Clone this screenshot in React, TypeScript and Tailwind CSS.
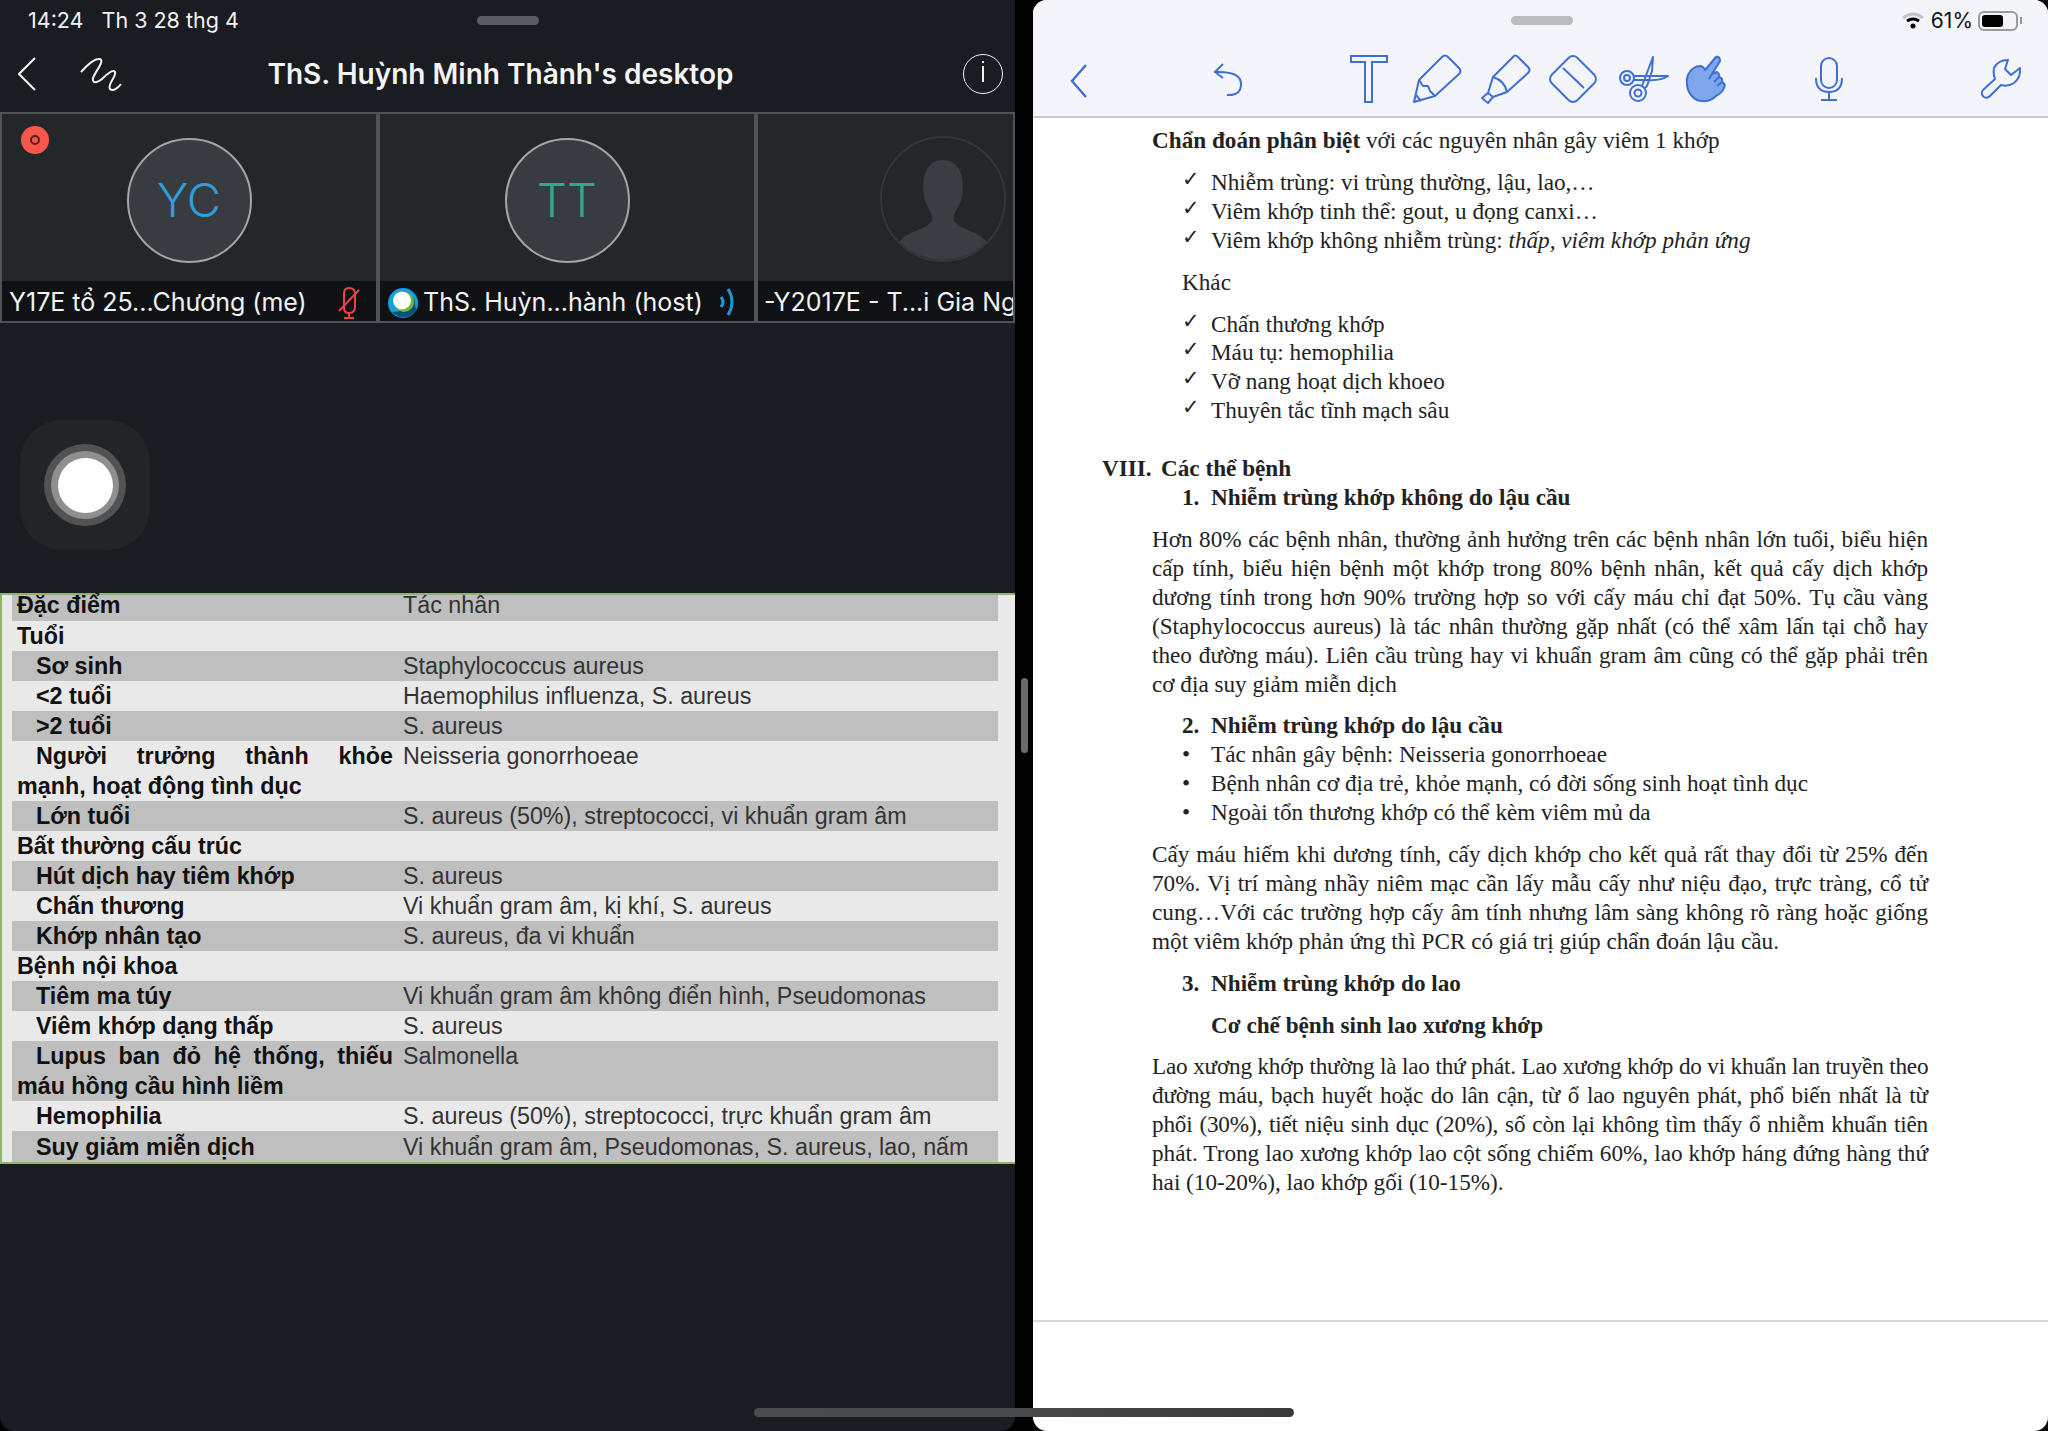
const BLUE = "#3f6fd2";

type Row = { a: string; b: string; indent?: boolean; lines?: [string, string] };

const ROWS: Row[] = [
  { a: "Đặc điểm", b: "Tác nhân" },
  { a: "Tuổi", b: "" },
  { a: "Sơ sinh", b: "Staphylococcus aureus", indent: true },
  { a: "<2 tuổi", b: "Haemophilus influenza, S. aureus", indent: true },
  { a: ">2 tuổi", b: "S. aureus", indent: true },
  { a: "", b: "Neisseria gonorrhoeae", indent: true, lines: ["Người trưởng thành khỏe", "mạnh, hoạt động tình dục"] },
  { a: "Lớn tuổi", b: "S. aureus (50%), streptococci, vi khuẩn gram âm", indent: true },
  { a: "Bất thường cấu trúc", b: "" },
  { a: "Hút dịch hay tiêm khớp", b: "S. aureus", indent: true },
  { a: "Chấn thương", b: "Vi khuẩn gram âm, kị khí, S. aureus", indent: true },
  { a: "Khớp nhân tạo", b: "S. aureus, đa vi khuẩn", indent: true },
  { a: "Bệnh nội khoa", b: "" },
  { a: "Tiêm ma túy", b: "Vi khuẩn gram âm không điển hình, Pseudomonas", indent: true },
  { a: "Viêm khớp dạng thấp", b: "S. aureus", indent: true },
  { a: "", b: "Salmonella", indent: true, lines: ["Lupus ban đỏ hệ thống, thiếu", "máu hồng cầu hình liềm"] },
  { a: "Hemophilia", b: "S. aureus (50%), streptococci, trực khuẩn gram âm", indent: true },
  { a: "Suy giảm miễn dịch", b: "Vi khuẩn gram âm, Pseudomonas, S. aureus, lao, nấm", indent: true },
];

function Tile({ children, label, icon, className }: { children: React.ReactNode; label: string; icon?: React.ReactNode; className: string }) {
  return (
    <div className={"flex flex-col h-[211px] bg-[#24272a] border-2 border-[#505356] overflow-hidden " + className}>
      <div className="flex-1 relative flex items-center justify-center pt-[5px]">{children}</div>
      <div className="h-[40px] bg-[#0f1114] flex items-center whitespace-nowrap text-[#f2f2f2] text-[25px] pt-[4px]">{icon}{label}</div>
    </div>
  );
}

function Initials({ text, color }: { text: string; color: string }) {
  return (
    <div className={"w-[125px] h-[125px] rounded-full bg-[#383b40] border-2 border-[#a3a5a7] flex items-center justify-center text-[47px] font-light " + color}>
      {text}
    </div>
  );
}

function Pencil() {
  return (
    <svg width="50" height="50" viewBox="0 0 50 50" fill="none" stroke={BLUE} strokeWidth="2" strokeLinejoin="round" className="ml-[25px]">
      <path d="M1 48 L6 26 L29 3 Q32 0 35 3 L46 14 Q49 17 46 20 L22 42 Z" />
      <path d="M6 26 L10 32 L15 32 L17 37 L22 42" />
      <path d="M3 41 L8 47" />
    </svg>
  );
}

function Highlighter() {
  return (
    <svg width="50" height="50" viewBox="0 0 50 50" fill="none" stroke={BLUE} strokeWidth="2" strokeLinejoin="round" className="ml-[18px]">
      <path d="M12 23 L32 3 Q34 0 37 3 L47 13 Q50 16 47 19 L26 38 Q24 27 12 23 Z" />
      <path d="M12 23 L7 39 L12 43 L26 38" />
      <path d="M7 39 L1 44 L7 49 L12 43" />
    </svg>
  );
}

function Eraser() {
  return (
    <svg width="50" height="50" viewBox="0 0 50 50" fill="none" stroke={BLUE} strokeWidth="2" strokeLinejoin="round" className="ml-[17px]">
      <rect x="7" y="7" width="36" height="36" rx="6" transform="rotate(45 25 25)" />
      <path d="M15 14 L36 34" />
    </svg>
  );
}

function Scissors() {
  return (
    <svg width="50" height="48" viewBox="0 0 50 48" fill="none" stroke={BLUE} strokeWidth="2" strokeLinejoin="round" className="ml-[21px]">
      <circle cx="8" cy="23" r="7" />
      <circle cx="8" cy="23" r="3" />
      <circle cx="19" cy="38" r="8" />
      <circle cx="19" cy="38" r="3.5" />
      <path d="M23 31 L34 2 L33 16 L28 31 L26 33" />
      <path d="M15 21 L49 21 Q42 26 27 25 L14 25" />
    </svg>
  );
}

function Hand() {
  return (
    <svg width="40" height="48" viewBox="0 0 40 48" fill="#7ea7ee" stroke={BLUE} strokeWidth="2" strokeLinejoin="round" className="ml-[17px]">
      <path d="M30 2 Q34 1 34 6 L26 19 L31 17 Q34 19 33 22 Q37 23 36 27 Q40 29 38 33 Q36 38 30 41 Q24 47 16 46 Q8 46 3 37 Q-1 28 2 20 Q6 11 15 11 Q18 12 19 15 Z" />
      <path d="M26 19 L23 24 M33 22 L28 27 M36 27 L31 31" fill="none" />
    </svg>
  );
}

function Para({ lines, last }: { lines: string[]; last: string }) {
  return (
    <div className="ml-[119px] w-[776px] mt-[13px]">
      {lines.map((l, i) => (
        <div key={i} className={"whitespace-nowrap text-justify [text-align-last:justify] " + (l.length >= 80 ? "tracking-[-0.18px]" : "")}>{l}</div>
      ))}
      <div>{last}</div>
    </div>
  );
}

function Check({ children }: { children: React.ReactNode }) {
  return (
    <div className="flex ml-[149px]">
      <span className="w-[29px] font-['DejaVu_Sans',sans-serif] text-[21px] font-bold -mt-[3px]">✓</span>
      <span>{children}</span>
    </div>
  );
}

function Bullet({ children }: { children: React.ReactNode }) {
  return (
    <div className="flex ml-[149px]">
      <span className="w-[29px]">•</span>
      <span>{children}</span>
    </div>
  );
}

function Numbered({ n, children, className }: { n: string; children: React.ReactNode; className?: string }) {
  return (
    <div className={"flex ml-[149px] font-bold " + (className ?? "")}>
      <span className="w-[29px]">{n}</span>
      <span>{children}</span>
    </div>
  );
}

export default function App() {
  return (
    <div className="relative w-[2048px] h-[1431px] bg-black flex overflow-hidden font-['Inter',sans-serif]">
      {/* Webex panel */}
      <div className="w-[1015px] h-full bg-[#191c20] flex flex-col rounded-b-[14px] overflow-hidden">
        <div className="h-[40px] flex items-center relative text-[21.5px] text-[#f2f2f2] pl-[28px] pt-[1px]">
          <span>14:24</span>
          <span className="ml-[18px]">Th 3 28 thg 4</span>
          <div className="absolute left-[477px] top-[16px] w-[62px] h-[9px] rounded-full bg-[#5a5d62]" />
        </div>
        <div className="h-[70px] flex items-center pl-[18px] pr-[12px] relative pb-[2px]">
          <svg width="18" height="34" viewBox="0 0 18 34" fill="none" stroke="#f2f2f2" strokeWidth="2"><path d="M17 1 L1 17 L17 33" /></svg>
          <svg width="44" height="36" viewBox="0 0 44 36" fill="none" stroke="#f2f2f2" strokeWidth="2" className="ml-[44px]">
            <path d="M1 16 C8 8 15 2 20 3 C25 5 15 16 13 22 C12 28 17 27 22 23 C27 18 33 13 35 16 C37 20 27 28 30 33 C33 36 38 32 41 28" />
          </svg>
          <div className="flex-1 text-center text-[28px] font-semibold text-[#f4f4f4] pr-[86px]">ThS. Huỳnh Minh Thành's desktop</div>
          <div className="w-[40px] h-[40px] rounded-full border-[1.5px] border-[#f2f2f2] flex items-center justify-center">
            <span className="w-[2px] h-[16px] bg-[#f2f2f2] relative">
              <span className="absolute -top-[5px] left-0 w-[2px] h-[2px] bg-[#f2f2f2]" />
            </span>
          </div>
        </div>
        <div className="flex h-[211px] mt-[2px]">
          <Tile
            className="w-[378px] shrink-0"
            label="Y17E tổ 25...Chương (me)"
            icon={<span className="w-[7px]" />}
          >
            <div className="absolute left-[19px] top-[12px] w-[28px] h-[28px] rounded-full bg-[#f9574b] flex items-center justify-center">
              <div className="w-[10px] h-[10px] rounded-full border-2 border-[#5e1a16]" />
            </div>
            <Initials text="YC" color="text-[#2e9fdb]" />
            <svg width="26" height="34" viewBox="0 0 26 34" fill="none" stroke="#e9444a" strokeWidth="2" className="absolute left-[334px] top-[172px]">
              <path d="M8 22 V8 Q8 2 13 2 Q19 2 19 8 V20 Q19 27 13 27 Q8 27 8 22 Z" />
              <path d="M13 27 V31 M8 32 H18 M3 25 L23 4" />
            </svg>
          </Tile>
          <Tile
            className="w-[378px] shrink-0"
            label="ThS. Huỳn...hành (host)"
            icon={
              <svg width="30" height="30" viewBox="0 0 30 30" className="ml-[8px] mr-[5px]">
                <circle cx="15" cy="15" r="15" fill="#14a0da" />
                <path d="M4 24 A15 15 0 0 0 28 22 L26 10 Q20 24 4 24 Z" fill="#0a4f78" />
                <circle cx="16" cy="14" r="10" fill="#6cbb3c" />
                <circle cx="14" cy="12.5" r="9" fill="#ffffff" />
              </svg>
            }
          >
            <Initials text="TT" color="text-[#2fa98c]" />
            <svg width="18" height="30" viewBox="0 0 18 30" fill="none" stroke="#169bdc" strokeWidth="3" className="absolute left-[339px] top-[173px]">
              <path d="M9 2 Q17 15 9 28" />
              <path d="M2 10 Q6 15 2 20" />
            </svg>
          </Tile>
          <Tile className="flex-1 min-w-0" label="-Y2017E - T...i Gia Nguyễn" icon={<span className="w-[6px] shrink-0" />}>
            <div className="absolute left-[122px] top-[22px] w-[126px] h-[126px] rounded-full border-2 border-[#33363a] overflow-hidden">
              <svg width="122" height="122" viewBox="0 0 122 122" fill="#3a3d41">
                <path d="M61 22 C40 22 40 48 42 58 C44 70 52 74 50 83 C44 92 22 94 16 106 A62 62 0 0 0 106 106 C100 94 78 92 72 83 C70 74 78 70 80 58 C82 48 82 22 61 22 Z" />
              </svg>
            </div>
          </Tile>
        </div>

        {/* nút AssistiveTouch */}
        <div className="ml-[20px] mt-[97px] w-[130px] h-[130px] rounded-[42px] bg-[#232426] flex items-center justify-center">
          <div className="w-[82px] h-[82px] rounded-full bg-[#505254] flex items-center justify-center">
            <div className="w-[68px] h-[68px] rounded-full bg-[#8f8f8f] flex items-center justify-center">
              <div className="w-[55px] h-[55px] rounded-full bg-white" />
            </div>
          </div>
        </div>

        {/* bảng chia sẻ */}
        <div className="mt-[43px] bg-[#e9e9e9] border-t-2 border-b-2 border-l-2 border-[#8fb56b] pl-[10px] pr-[17px] font-['Liberation_Sans',sans-serif] text-[23.3px] leading-[30px] text-[#111]">
          {ROWS.map((r, i) => (
            <div key={i} className={"flex " + (i % 2 === 0 ? "bg-[#bfbfbf] " : "") + (i === 0 ? "h-[26px] " : "") + (i === 16 ? "pt-[1px] " : "")}>
              <div className={"w-[386px] shrink-0 pl-[5px] font-bold " + (i === 0 ? "-mt-[5px]" : "")}>
                {r.lines ? (
                  <>
                    <div className="w-[376px] indent-[19px] text-justify [text-align-last:justify]">{r.lines[0]}</div>
                    <div>{r.lines[1]}</div>
                  </>
                ) : (
                  <div className={r.indent ? "pl-[19px]" : ""}>{r.a}</div>
                )}
              </div>
              <div className={"pl-[5px] text-[#333] " + (i === 0 ? "-mt-[5px]" : "")}>{r.b}</div>
            </div>
          ))}
        </div>
      </div>

      {/* vạch chia */}
      <div className="w-[18px] h-full flex items-center justify-center">
        <div className="w-[7px] h-[75px] rounded-full bg-[#6b6b6b]" />
      </div>

      {/* Notes panel */}
      <div className="w-[1015px] h-full bg-white flex flex-col rounded-t-[14px] rounded-b-[14px] overflow-hidden">
        <div className="h-[118px] bg-[#f4f5fa] border-b-2 border-[#c9c9cc] shrink-0 flex flex-col">
          <div className="h-[40px] flex items-center justify-end relative pr-[26px] pt-[1px] text-[21px] text-[#111]">
            <div className="absolute left-[478px] top-[16px] w-[62px] h-[9px] rounded-full bg-[#bbbcc0]" />
            <svg width="24" height="18" viewBox="0 0 24 18" fill="none" strokeWidth="3">
              <path d="M2 6 Q12 -2 22 6" stroke="#c4c4c6" />
              <path d="M6 9 Q12 5 18 9" stroke="#000" />
              <circle cx="12" cy="14" r="2.5" fill="#000" />
            </svg>
            <span className="ml-[6px]">61%</span>
            <div className="ml-[5px] w-[40px] h-[20px] rounded-[6px] border-2 border-[#9a9a9c] p-[2px] flex">
              <div className="w-[21px] h-full rounded-[3px] bg-black" />
            </div>
            <div className="ml-[2px] w-[2px] h-[7px] bg-[#9a9a9c]" />
          </div>
          <div className="flex-1 flex items-center pl-[37px] pt-[2px]">
            <svg width="18" height="34" viewBox="0 0 18 34" fill="none" stroke={BLUE} strokeWidth="2.4" className="mt-[3px]"><path d="M16 1 L2 17 L16 33" /></svg>
            <svg width="30" height="34" viewBox="0 0 30 34" fill="none" stroke={BLUE} strokeWidth="2" className="ml-[125px] mt-[2px]">
              <path d="M10 1 L2 9 L10 15 M2 9 Q28 8 28 21 Q28 33 14 32" />
            </svg>
            <svg width="38" height="48" viewBox="0 0 38 48" fill="none" stroke={BLUE} strokeWidth="2" className="ml-[107px]">
              <path d="M1 1 H37 V7 H22 V47 H15 V7 H1 Z" />
            </svg>
            <Pencil />
            <Highlighter />
            <Eraser />
            <Scissors />
            <Hand />
            <svg width="28" height="44" viewBox="0 0 28 44" fill="none" stroke={BLUE} strokeWidth="2" className="ml-[89px]">
              <rect x="6" y="1" width="16" height="30" rx="8" />
              <path d="M1 21 Q1 35 14 35 Q27 35 27 21 M14 35 V42 M6 43 H22" />
            </svg>
            <svg width="40" height="40" viewBox="0 0 40 40" fill="none" stroke={BLUE} strokeWidth="2" strokeLinejoin="round" className="ml-[138px]">
              <path d="M27 1 Q17 1 13 9 Q12 15 14 20 L2 31 Q-1 35 3 38 Q6 40 9 37 L20 26 Q27 28 33 24 Q40 18 39 9 L30 16 L24 10 Z" />
            </svg>
          </div>
        </div>

        {/* trang tài liệu */}
        <div className="h-[1204px] shrink-0 border-b-2 border-[#d8d8e4] pt-[8px] font-['Liberation_Serif',serif] text-[23.2px] leading-[28.9px] text-[#222]">
          <div className="ml-[119px]"><b>Chẩn đoán phân biệt</b> với các nguyên nhân gây viêm 1 khớp</div>
          <div className="mt-[13px]">
            <Check>Nhiễm trùng: vi trùng thường, lậu, lao,…</Check>
            <Check>Viêm khớp tinh thể: gout, u đọng canxi…</Check>
            <Check>Viêm khớp không nhiễm trùng: <i>thấp, viêm khớp phản ứng</i></Check>
          </div>
          <div className="ml-[149px] mt-[13px]">Khác</div>
          <div className="mt-[13px]">
            <Check>Chấn thương khớp</Check>
            <Check>Máu tụ: hemophilia</Check>
            <Check>Vỡ nang hoạt dịch khoeo</Check>
            <Check>Thuyên tắc tĩnh mạch sâu</Check>
          </div>
          <div className="flex ml-[69px] mt-[29px] font-bold">
            <span className="w-[59px]">VIII.</span>
            <span>Các thể bệnh</span>
          </div>
          <Numbered n="1.">Nhiễm trùng khớp không do lậu cầu</Numbered>
          <Para
            lines={[
              "Hơn 80% các bệnh nhân, thường ảnh hưởng trên các bệnh nhân lớn tuổi, biểu hiện",
              "cấp tính, biểu hiện bệnh một khớp trong 80% bệnh nhân, kết quả cấy dịch khớp",
              "dương tính trong hơn 90% trường hợp so với cấy máu chỉ đạt 50%. Tụ cầu vàng",
              "(Staphylococcus aureus) là tác nhân thường gặp nhất (có thể xâm lấn tại chỗ hay",
              "theo đường máu). Liên cầu trùng hay vi khuẩn gram âm cũng có thể gặp phải trên",
            ]}
            last="cơ địa suy giảm miễn dịch"
          />
          <Numbered n="2." className="mt-[13px]">Nhiễm trùng khớp do lậu cầu</Numbered>
          <Bullet>Tác nhân gây bệnh: Neisseria gonorrhoeae</Bullet>
          <Bullet>Bệnh nhân cơ địa trẻ, khỏe mạnh, có đời sống sinh hoạt tình dục</Bullet>
          <Bullet>Ngoài tổn thương khớp có thể kèm viêm mủ da</Bullet>
          <Para
            lines={[
              "Cấy máu hiếm khi dương tính, cấy dịch khớp cho kết quả rất thay đổi từ 25% đến",
              "70%. Vị trí màng nhầy niêm mạc cần lấy mẫu cấy như niệu đạo, trực tràng, cổ tử",
              "cung…Với các trường hợp cấy âm tính nhưng lâm sàng không rõ ràng hoặc giống",
            ]}
            last="một viêm khớp phản ứng thì PCR có giá trị giúp chẩn đoán lậu cầu."
          />
          <Numbered n="3." className="mt-[13px]">Nhiễm trùng khớp do lao</Numbered>
          <div className="ml-[178px] mt-[13px] font-bold">Cơ chế bệnh sinh lao xương khớp</div>
          <Para
            lines={[
              "Lao xương khớp thường là lao thứ phát. Lao xương khớp do vi khuẩn lan truyền theo",
              "đường máu, bạch huyết hoặc do lân cận, từ ổ lao nguyên phát, phổ biến nhất là từ",
              "phổi (30%), tiết niệu sinh dục (20%), số còn lại không tìm thấy ổ nhiễm khuẩn tiên",
              "phát. Trong lao xương khớp lao cột sống chiếm 60%, lao khớp háng đứng hàng thứ",
            ]}
            last="hai (10-20%), lao khớp gối (10-15%)."
          />
        </div>
      </div>

      {/* thanh home */}
      <div className="absolute left-[754px] top-[1408px] w-[540px] h-[9px] rounded-full bg-gradient-to-r from-[#4a4b4d] via-[#48494b] to-[#3a3a3a]" />
    </div>
  );
}
